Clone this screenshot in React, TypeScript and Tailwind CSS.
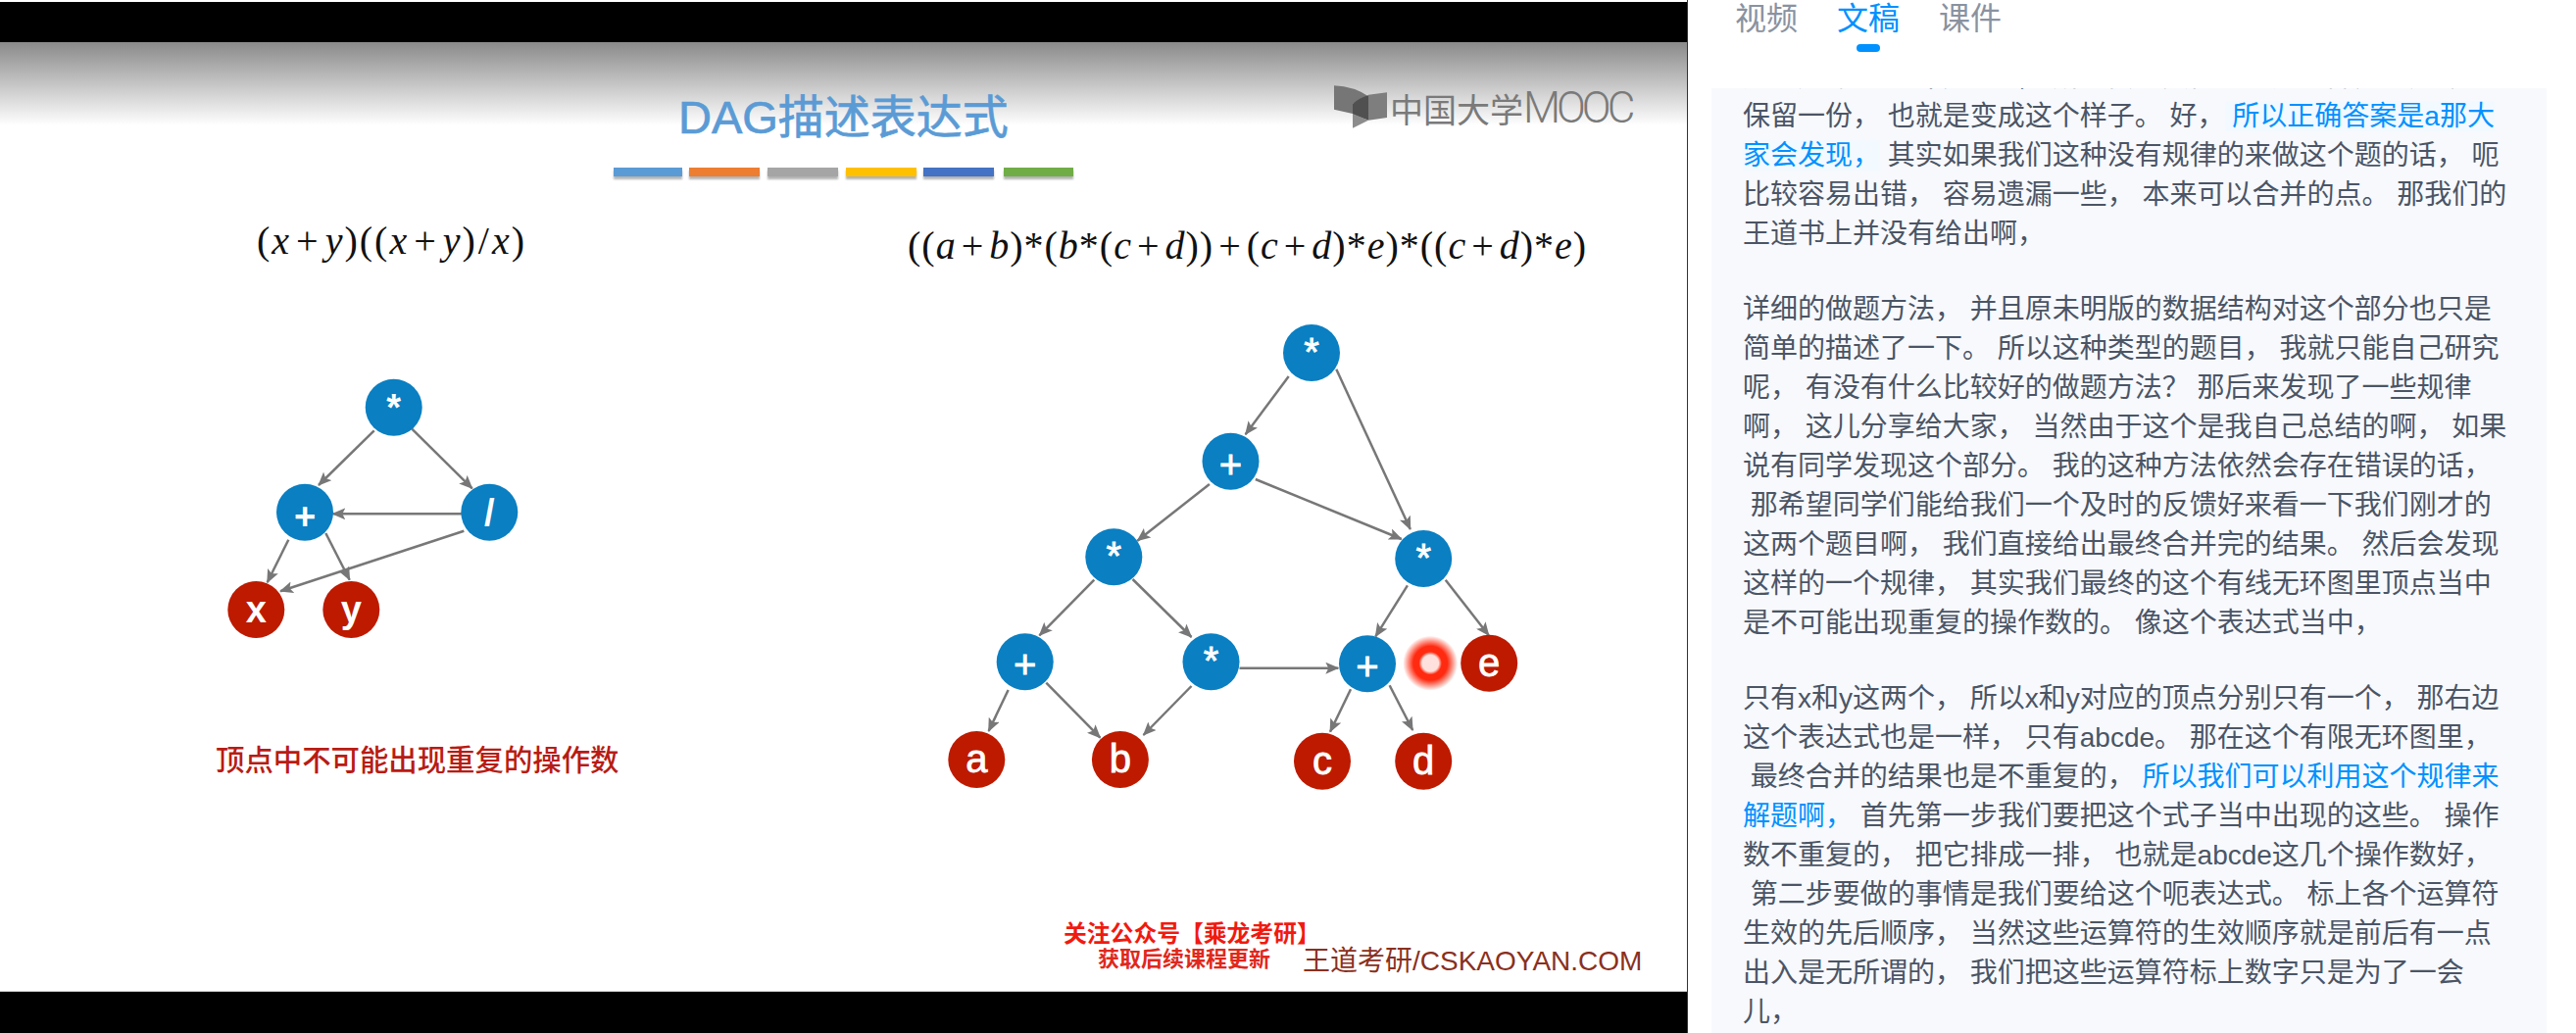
import React from 'react';

const edges = [
  // left graph
  [381.7, 439.3, 325, 495],
  [420, 437.3, 481.7, 498.3],
  [471.7, 524.3, 339.3, 524.3],
  [473.3, 541.7, 286, 603.3],
  [294.3, 550.7, 272.7, 594.3],
  [332.3, 544, 356.7, 591.7],
  // right graph
  [1314.7, 384, 1270.6, 443.3],
  [1363.3, 376.7, 1438.8, 540],
  [1233.9, 494, 1160.4, 551.7],
  [1280.8, 489, 1429.8, 550],
  [1116.3, 591.7, 1060.4, 648.3],
  [1155.5, 591, 1215.5, 650],
  [1264.5, 681.7, 1365.3, 681.7],
  [1435.9, 597.3, 1403.3, 649.3],
  [1474.7, 591.7, 1518.8, 648.3],
  [1028.6, 704, 1008.6, 746],
  [1067.3, 696.7, 1122.4, 752.7],
  [1215.5, 700, 1166.5, 750],
  [1378, 703.3, 1357, 746.7],
  [1417.6, 699.3, 1441.2, 745],
];

const ops: [number, number, string][] = [
  [401.7, 415.7, '*'],
  [311, 522.7, '+'],
  [499.3, 522.7, '/'],
  [1338, 360, '*'],
  [1255.5, 470.7, '+'],
  [1136.3, 568.3, '*'],
  [1452.2, 570, '*'],
  [1045.7, 675.3, '+'],
  [1235.5, 675.3, '*'],
  [1395, 677.3, '+'],
];

const leaves: [number, number, string][] = [
  [261.3, 622, 'x'],
  [358.3, 622, 'y'],
  [1519.2, 676.7, 'e'],
  [996.3, 775, 'a'],
  [1142.9, 775, 'b'],
  [1349, 776.7, 'c'],
  [1452.2, 776.7, 'd'],
];

const bars = ['bg-[#5b9bd5] w-[70px] ml-0', 'bg-[#ed7d31] w-[72px] ml-[7px]', 'bg-[#a5a5a5] w-[72px] ml-[8px]', 'bg-[#ffc000] w-[72px] ml-[8px]', 'bg-[#4472c4] w-[72px] ml-[7px]', 'bg-[#70ad47] w-[71px] ml-[10px]'];

const Node = ({ x, y, label, color }: { x: number; y: number; label: string; color: string }) => {
  // the small graph on the left has heavier labels than the big one
  const heavy = x < 600;
  return (
    <g>
      <circle cx={x} cy={y} r={29} fill={color} />
      <text
        x={x}
        y={label === '+' ? y + 17 : y + 13}
        textAnchor="middle"
        fill="#fff"
        stroke={heavy ? 'none' : '#fff'}
        strokeWidth={heavy ? 0 : 0.8}
        fontSize={heavy ? 38 : 40}
        fontWeight={heavy ? 700 : 400}
        fontFamily="'Liberation Sans', sans-serif"
      >
        {label}
      </text>
    </g>
  );
};

const Graph = () => (
  <svg className="absolute inset-0" width={1721} height={968} viewBox="0 43 1721 968">
    <defs>
      <marker id="head" markerUnits="userSpaceOnUse" markerWidth="14" markerHeight="12" refX="13" refY="6" orient="auto">
        <path d="M0 0 L14 6 L0 12 L3 6 Z" fill="#777" />
      </marker>
      <radialGradient id="pointer">
        <stop offset="0.3" stopColor="#ffe0dc" />
        <stop offset="0.42" stopColor="#ff2a10" />
        <stop offset="0.62" stopColor="#ff2a10" />
        <stop offset="1" stopColor="#ff2a10" stopOpacity="0" />
      </radialGradient>
    </defs>
    {edges.map((e, i) => (
      <line key={i} x1={e[0]} y1={e[1]} x2={e[2]} y2={e[3]} stroke="#777" strokeWidth={2.5} markerEnd="url(#head)" />
    ))}
    {ops.map(([x, y, l], i) => (
      <Node key={i} x={x} y={y} label={l} color="#0a7fc2" />
    ))}
    {leaves.map(([x, y, l], i) => (
      <Node key={i} x={x} y={y} label={l} color="#bd1a00" />
    ))}
    <circle cx={1459.2} cy={676.7} r={28} fill="url(#pointer)" />
  </svg>
);

const Logo = () => (
  <div className="absolute left-[1350px] top-[37px] flex items-start">
    <svg width={90} height={60} viewBox="0 0 270 180">
      <path d="M33 22 Q95 25 138 55 L90 78 L90 108 L33 95 Z" fill="#767676" />
      <path d="M138 50 L195 43 L195 120 L138 128 Z" fill="#7e7e7e" />
      <path d="M90 78 Q110 60 138 52 L138 128 L90 110 Z" fill="#505050" />
      <path d="M90 108 L138 128 L90 152 Z" fill="#8c8c8c" />
    </svg>
    <span className="-ml-[22px] mt-[6px] text-[34px] leading-[48px] text-[#7a7a7a] whitespace-nowrap">
      中国大学<span className="font-['Roboto',sans-serif] font-light text-[44px] tracking-[-4px]">MOOC</span>
    </span>
  </div>
);

const Plus = () => <span className="mx-[5px]">+</span>;

const Slide = () => (
  <div className="relative flex-1 bg-[linear-gradient(#8a8a8a,#ffffff_85px)] border-b border-[#c8c8c8] font-['Liberation_Sans','Noto_Sans_CJK_SC',sans-serif]">
    <Graph />
    <h1 className="absolute left-[692px] top-[44px] text-[47px] leading-[66px] font-normal text-[#5b9bd5] [-webkit-text-stroke:0.7px_#5b9bd5] whitespace-nowrap">DAG描述表达式</h1>
    <div className="absolute left-[626px] top-[128px] flex">
      {bars.map((b) => (
        <div key={b} className={`h-[9px] shadow-[0_3px_2px_rgba(0,0,0,0.3)] ${b}`} />
      ))}
    </div>
    <Logo />
    <div className="absolute left-[262px] top-[181px] font-['Liberation_Serif',serif] text-[40px] leading-[44px] tracking-[2px] text-[#111] whitespace-nowrap">
      (<i>x</i>
      <Plus />
      <i>y</i>)((<i>x</i>
      <Plus />
      <i>y</i>)<span className="mx-px">/</span>
      <i>x</i>)
    </div>
    <div className="absolute left-[926px] top-[186px] font-['Liberation_Serif',serif] text-[40px] leading-[44px] tracking-[1px] text-[#111] whitespace-nowrap">
      ((<i>a</i>
      <Plus />
      <i>b</i>)*(<i>b</i>*(<i>c</i>
      <Plus />
      <i>d</i>))<Plus />(<i>c</i>
      <Plus />
      <i>d</i>)*<i>e</i>)*((<i>c</i>
      <Plus />
      <i>d</i>)*<i>e</i>)
    </div>
    <p className="absolute left-[220px] top-[712px] text-[29.4px] leading-[42px] font-medium text-[#b81c14] whitespace-nowrap">顶点中不可能出现重复的操作数</p>
    <p className="absolute left-[1085px] top-[894px] text-[23.8px] leading-[32px] font-bold text-[#f01a10] whitespace-nowrap">关注公众号【乘龙考研】</p>
    <p className="absolute left-[1120px] top-[920px] text-[22px] leading-[32px] font-bold text-[#e0281c] whitespace-nowrap">获取后续课程更新</p>
    <p className="absolute left-[1329px] top-[918px] text-[28px] leading-[40px] text-[#8a3020] whitespace-nowrap">王道考研/CSKAOYAN.COM</p>
  </div>
);

const Mark = ({ children, tint }: { children: React.ReactNode; tint?: boolean }) => (
  <span className={tint ? 'text-[#0091ff] bg-[#f2f9ff]' : 'text-[#0091ff]'}>{children}</span>
);

const Transcript = () => (
  <div className="-mt-[31px] whitespace-pre text-[28px] leading-[40px] text-[#4b5565] font-['Liberation_Sans','Noto_Sans_CJK_SC',sans-serif]">
    <p className="mb-0">{'这个加号已经出现过了， 所以我们只需要把这个部分的加号再'}</p>
    <p className="mb-[37px]">
      {'保留一份， 也就是变成这个样子。 好，'}
      <Mark tint>{' 所以正确答案是a那大\n家会发现，'}</Mark>
      {' 其实如果我们这种没有规律的来做这个题的话， 呃\n比较容易出错， 容易遗漏一些， 本来可以合并的点。 那我们的\n王道书上并没有给出啊，'}
    </p>
    <p className="mb-[37px]">
      {`详细的做题方法， 并且原未明版的数据结构对这个部分也只是
简单的描述了一下。 所以这种类型的题目， 我就只能自己研究
呢， 有没有什么比较好的做题方法？ 那后来发现了一些规律
啊， 这儿分享给大家， 当然由于这个是我自己总结的啊， 如果
说有同学发现这个部分。 我的这种方法依然会存在错误的话，
 那希望同学们能给我们一个及时的反馈好来看一下我们刚才的
这两个题目啊， 我们直接给出最终合并完的结果。 然后会发现
这样的一个规律， 其实我们最终的这个有线无环图里顶点当中
是不可能出现重复的操作数的。 像这个表达式当中，`}
    </p>
    <p>
      {`只有x和y这两个， 所以x和y对应的顶点分别只有一个， 那右边
这个表达式也是一样， 只有abcde。 那在这个有限无环图里，
 最终合并的结果也是不重复的， `}
      <Mark>{'所以我们可以利用这个规律来\n解题啊，'}</Mark>
      {` 首先第一步我们要把这个式子当中出现的这些。 操作
数不重复的， 把它排成一排， 也就是abcde这几个操作数好，
 第二步要做的事情是我们要给这个呃表达式。 标上各个运算符
生效的先后顺序， 当然这些运算符的生效顺序就是前后有一点
出入是无所谓的， 我们把这些运算符标上数字只是为了一会
儿，`}
    </p>
  </div>
);

const Tab = ({ label, active }: { label: string; active?: boolean }) => (
  <div className="flex flex-col items-center">
    <span className={`text-[32px] leading-[32px] ${active ? 'text-[#0091ff]' : 'text-[#8a92a0]'}`}>{label}</span>
    <span className={`mt-[13px] h-2 w-6 rounded-full ${active ? 'bg-[#0091ff]' : 'bg-transparent'}`} />
  </div>
);

export default function App() {
  return (
    <div className="flex h-[1054px] w-[2628px] overflow-hidden bg-white font-['Noto_Sans_CJK_SC',sans-serif]">
      <div className="flex w-[1722px] shrink-0 flex-col border-r border-[#333] pt-[2px]">
        <div className="h-[41px] bg-black" />
        <Slide />
        <div className="h-[42px] bg-black" />
      </div>
      <div className="flex flex-1 flex-col">
        <div className="flex h-[90px] shrink-0 gap-10 pl-[48px]">
          <Tab label="视频" />
          <Tab label="文稿" active />
          <Tab label="课件" />
        </div>
        <div className="ml-6 mr-[30px] flex-1 overflow-hidden bg-[#f7f9fd] px-[32px]">
          <Transcript />
        </div>
      </div>
    </div>
  );
}
